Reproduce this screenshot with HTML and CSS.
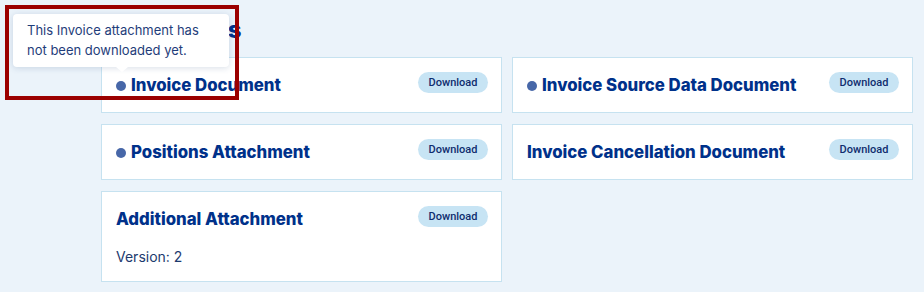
FILE: index.html
```html
<!DOCTYPE html>
<html>
<head>
<meta charset="UTF-8">
<title>Documents</title>
<link rel="stylesheet" href="styles.css">
</head>
<body>
<!-- 附件列表 -->
<div class="page">
  <h2 class="page-title">Documents</h2>
  <div class="grid">
    <div class="card">
      <div class="card-head">
        <h3 class="card-title"><span class="dot"></span>Invoice Document</h3>
        <button class="btn">Download</button>
      </div>
    </div>
    <div class="card">
      <div class="card-head">
        <h3 class="card-title"><span class="dot"></span>Invoice Source Data Document</h3>
        <button class="btn">Download</button>
      </div>
    </div>
    <div class="card">
      <div class="card-head">
        <h3 class="card-title"><span class="dot"></span>Positions Attachment</h3>
        <button class="btn">Download</button>
      </div>
    </div>
    <div class="card">
      <div class="card-head">
        <h3 class="card-title">Invoice Cancellation Document</h3>
        <button class="btn">Download</button>
      </div>
    </div>
    <div class="card">
      <div class="card-head">
        <h3 class="card-title">Additional Attachment</h3>
        <button class="btn">Download</button>
      </div>
      <p class="version">Version: 2</p>
    </div>
  </div>
</div>
<!-- 提示框 -->
<div class="tooltip">This Invoice attachment has<br>not been downloaded yet.</div>
<!-- 标注框 -->
<div class="mark"></div>
</body>
</html>
```

FILE: styles.css
```css
body {
	margin: 0;
	background-color: #ebf3fa;
	font-family: Inter, "Liberation Sans", sans-serif;
	color: #00318a;
}
.page {
	padding: 0 11px 0 101px;
}
.page-title {
	margin: 0;
	height: 57px;
	line-height: 60px;
	font-size: 24px;
	font-weight: 800;
	letter-spacing: 0.5px;
	color: #00318a;
}
.grid {
	display: grid;
	grid-template-columns: 401px 401px;
	column-gap: 10px;
	row-gap: 11px;
	align-items: start;
}
.card {
	background-color: #fff;
	border: 1px solid #c6e2f0;
	padding: 14px 13px 14px 14px;
}
.card-head {
	display: flex;
	justify-content: space-between;
	align-items: flex-start;
}
.card-title {
	margin: 0;
	display: flex;
	align-items: center;
	font-size: 16.8px;
	line-height: 26px;
	font-weight: 800;
	color: #00318a;
}
.dot {
	display: inline-block;
	width: 10px;
	height: 10px;
	border-radius: 50%;
	background-color: #4767a8;
	margin: 1px 5px 0 0;
}
.btn {
	border: none;
	border-radius: 11px;
	background-color: #c7e4f4;
	height: 21px;
	width: 70px;
	padding: 0;
	font-family: Roboto, "Liberation Sans", sans-serif;
	font-size: 11px;
	font-weight: 500;
	color: #0f2d6e;
	cursor: pointer;
}
.version {
	margin: 15px 0 0;
	font-size: 14px;
	line-height: 20px;
	color: #1c3a6e;
}
/* 提示框 */
.tooltip {
	position: absolute;
	left: 13px;
	top: 14px;
	width: 188px;
	padding: 6px 14px 7px;
	background-color: #fff;
	border-radius: 4px;
	box-shadow: 0 1px 6px rgba(40, 70, 120, 0.18);
	font-size: 13px;
	line-height: 20px;
	color: #1f3d7a;
}
.tooltip:after {
	content: "";
	position: absolute;
	left: 103px;
	bottom: -5px;
	border-left: 6px solid transparent;
	border-right: 6px solid transparent;
	border-top: 5px solid #fff;
}
/* 红色标注 */
.mark {
	position: absolute;
	left: 5px;
	top: 5px;
	width: 226px;
	height: 87px;
	border: 4px solid #9b0000;
}
```
